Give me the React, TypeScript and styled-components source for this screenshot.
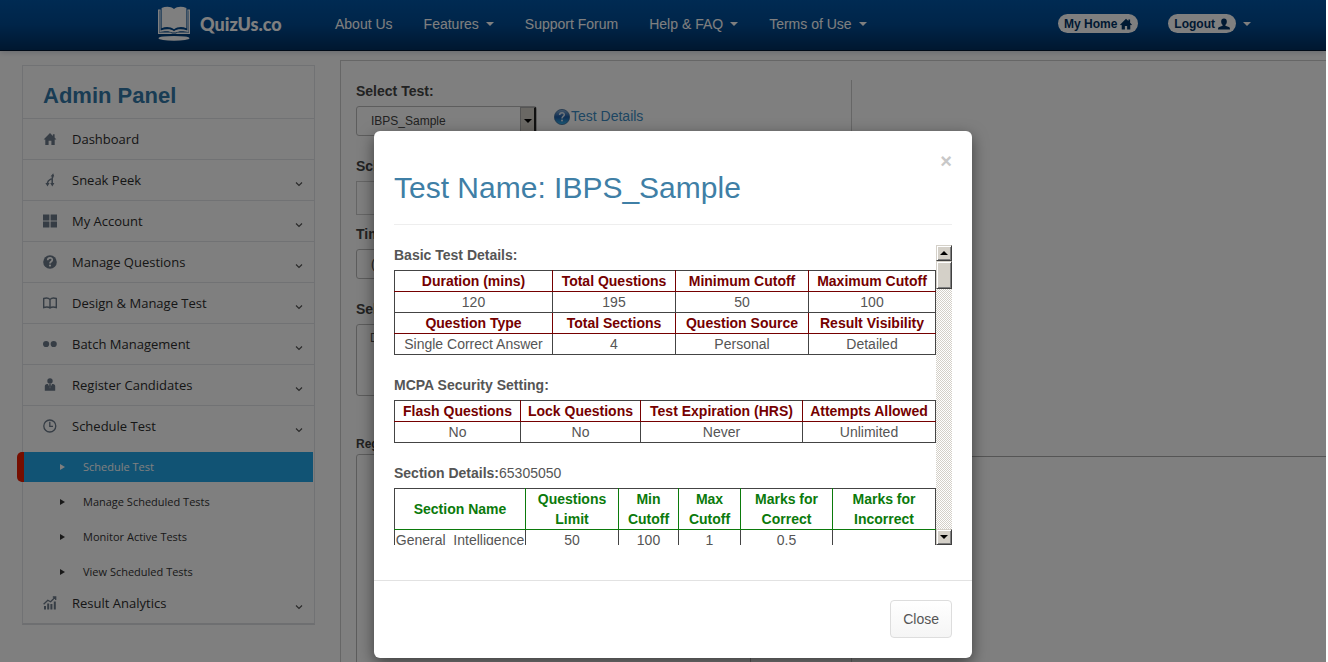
import React from 'react';
import styled, { createGlobalStyle, css } from 'styled-components';

const sans = '"Liberation Sans", Arial, sans-serif';
const humanist = '"Open Sans", "Noto Sans", sans-serif';

const GlobalStyle = createGlobalStyle`
  *, *::before, *::after { box-sizing: border-box; }
  body {
    margin: 0;
    background: #fff;
    color: #555;
    font-family: ${sans};
    font-size: 14px;
    line-height: 20px;
    overflow: hidden;
  }
  button, select, input, textarea { font-family: inherit; }
`;

const Shell = styled.div`
  position: relative;
  height: 100vh;
  margin-right: 2px;
  overflow: hidden;
`;

/* ---------- top navigation ---------- */

const NavBar = styled.header`
  display: flex;
  align-items: center;
  height: 51px;
  padding: 0 75px 3px 158px;
  background: linear-gradient(#0056a6, #004a92 50%, #002f60);
  border-bottom: 1px solid #00152e;
  box-shadow: 0 1px 6px rgba(0, 20, 60, 0.2);
  color: #fff;
`;

const Brand = styled.a`
  display: flex;
  align-items: center;
  gap: 10px;
  width: 177px;
  color: #fff;
  font-family: Lato, sans-serif;
  font-size: 18px;
  font-weight: 900;
  text-decoration: none;
`;

const NavLinks = styled.nav`
  display: flex;
  gap: 31px;
`;

const NavLink = styled.a`
  display: flex;
  align-items: center;
  gap: 7px;
  color: #fff;
  text-decoration: none;
  white-space: nowrap;
`;

const Caret = styled.span`
  border: 4px solid transparent;
  border-top-color: currentColor;
  border-bottom: 0;
`;

const UserLinks = styled.div`
  display: flex;
  gap: 30px;
  margin-left: auto;
`;

const Pill = styled.span`
  display: flex;
  align-items: center;
  gap: 3px;
  height: 19px;
  padding: 0 6px;
  border-radius: 10px;
  background: #fff;
  color: #003366;
  font-size: 12px;
  font-weight: bold;
`;

/* ---------- sidebar ---------- */

const Body = styled.div`
  display: flex;
  align-items: flex-start;
  gap: 25px;
  padding-left: 22px;
`;

const Sidebar = styled.aside`
  flex: 0 0 293px;
  margin-top: 14px;
  padding-bottom: 4px;
  border: 1px solid #e2e4e8;
  border-bottom: 2px solid #dcdee2;
  font-family: ${humanist};
`;

const PanelTitle = styled.h2`
  margin: 0;
  padding: 15px 20px 7px;
  color: #3279a8;
  font: bold 22px/30px ${sans};
`;

const MenuItem = styled.a<{ $compact?: boolean }>`
  display: flex;
  align-items: center;
  gap: 15px;
  height: ${(p) => (p.$compact ? '32px' : '41px')};
  padding: 0 11px 0 20px;
  border-top: ${(p) => (p.$compact ? '0' : '1px solid #e2e4e8')};
  color: #2c2c2c;
  font-size: 13px;
  text-decoration: none;
`;

const MenuIcon = styled.svg`
  width: 14px;
  height: 14px;
  color: #6c7a8a;
`;

const Chevron = styled.svg`
  width: 8px;
  height: 6px;
  margin: 8px 0 0 auto;
  color: #555;
`;

const SubMenu = styled.ul`
  display: flex;
  flex-direction: column;
  gap: 5px;
  margin: 0 1px 0 -6px;
  padding: 6px 0 0;
  list-style: none;
`;

const SubLink = styled.a<{ $active?: boolean }>`
  display: flex;
  align-items: center;
  gap: 18px;
  height: 30px;
  padding-left: 36px;
  border-left: 7px solid transparent;
  color: #333;
  font-size: 11px;
  text-decoration: none;
  ${(p) =>
    p.$active &&
    css`
      border-left-color: #ec1c00;
      border-radius: 5px 0 0 5px;
      background: #22a6e8;
      color: #fff;
    `}

  &::before {
    content: '';
    border: 3px solid transparent;
    border-left: 5px solid currentColor;
    border-right: 0;
  }
`;

/* ---------- form behind the dialog ---------- */

const Main = styled.main`
  display: flex;
  flex: 1;
  min-width: 0;
  height: calc(100vh - 60px);
  margin: 9px 0 0;
  padding: 19px 0 0 15px;
  border: 1px solid #ccc;
  border-width: 1px 0 0 1px;
`;

const FormColumn = styled.form`
  flex: 0 0 496px;
  padding-top: 1px;
  border-right: 1px solid #ccc;
`;

const SideColumn = styled.div`
  flex: 1;
  height: 377px;
  border-bottom: 1px solid #aaa;
`;

const Field = styled.div<{ $gap: number }>`
  margin-bottom: ${(p) => p.$gap}px;
`;

const Label = styled.label<{ $small?: boolean }>`
  display: block;
  padding-bottom: ${(p) => (p.$small ? 0 : 5)}px;
  color: #444;
  font-size: ${(p) => (p.$small ? 12 : 14)}px;
  font-weight: bold;
`;

const FieldRow = styled.div`
  display: flex;
  gap: 17px;
`;

const SelectFrame = styled.span`
  display: flex;
  width: 181px;
  height: 30px;
  border: 1px solid #bbb;
  border-radius: 3px;
`;

const Select = styled.select`
  flex: 1;
  min-width: 0;
  padding: 0 0 0 14px;
  border: 0;
  appearance: none;
  background: transparent;
  color: #444;
  font-size: 12px;
`;

const SelectArrow = styled.span`
  display: flex;
  align-items: center;
  justify-content: center;
  width: 16px;
  border: 1px solid #aaa;
  border-right: 2px solid #222;
  background: #d4d0c8;
  color: #000;
`;

const TextInput = styled.input`
  display: block;
  width: 220px;
  height: 34px;
  border: 1px solid #ccc;
  background: transparent;
`;

const TextArea = styled.textarea<{ $tall?: boolean }>`
  display: block;
  width: ${(p) => (p.$tall ? 395 : 220)}px;
  height: ${(p) => (p.$tall ? 230 : 72)}px;
  padding: 3px 13px;
  border: 1px solid #bbb;
  border-radius: 3px;
  background: transparent;
  color: #555;
  font-size: 12px;
  line-height: 20px;
  resize: none;
`;

const HelpLink = styled.a`
  display: flex;
  align-items: center;
  gap: 1px;
  height: 20px;
  color: #3c8dc5;
  text-decoration: none;
`;

/* ---------- dialog ---------- */

const Backdrop = styled.div`
  position: absolute;
  inset: 0;
  display: flex;
  align-items: flex-start;
  justify-content: center;
  padding: 131px 0 0 20px;
  background: rgba(0, 0, 0, 0.5);
`;

const Dialog = styled.section`
  width: 598px;
  border-radius: 6px;
  background: #fff;
  box-shadow: 0 5px 15px rgba(0, 0, 0, 0.5);
`;

const DialogHead = styled.div`
  display: flex;
  flex-direction: column;
  margin: 0 20px 20px;
  padding: 20px 0;
  border-bottom: 1px solid #eee;
`;

const Dismiss = styled.button`
  align-self: flex-end;
  height: 20px;
  padding: 0;
  border: 0;
  background: none;
  color: #c8c8c8;
  font-size: 20px;
  font-weight: bold;
  line-height: 20px;
`;

const DialogTitle = styled.h1`
  margin: 0;
  color: #3f7fa6;
  font-size: 30px;
  font-weight: normal;
  line-height: 33px;
`;

const ScrollRow = styled.div`
  display: flex;
  height: 300px;
  margin: 0 20px 35px;
`;

const ScrollArea = styled.div`
  flex: 1;
  min-width: 0;
  overflow: hidden;
`;

const SectionLabel = styled.p`
  margin: 0 0 5px;
`;

const DataTable = styled.table<{ $head: string }>`
  width: 100%;
  margin-bottom: 20px;
  border: 1px solid #444;
  border-collapse: collapse;
  table-layout: fixed;
  text-align: center;

  th, td { padding: 0; }
  th { color: ${(p) => p.$head}; border-bottom: 1px solid ${(p) => p.$head}; }
  th + th { border-left: 1px solid ${(p) => p.$head}; }
  td { border: 1px solid #444; height: 20px; }
`;

const ScrollBar = styled.div`
  display: flex;
  flex-direction: column;
  width: 16px;
  background: repeating-conic-gradient(#d4d0c8 0 25%, #fff 0 50%) 0 0 / 2px 2px;
`;

const Bevel = css`
  border: 1px solid;
  border-color: #d4d0c8 #404040 #404040 #d4d0c8;
  background: #d4d0c8;
  box-shadow: inset 1px 1px #fff, inset -1px -1px #808080;
`;

const ScrollButton = styled.button`
  ${Bevel}
  display: flex;
  align-items: center;
  justify-content: center;
  height: 16px;
  padding: 0;
  color: #000;
`;

const ScrollThumb = styled.div`
  ${Bevel}
  height: 28px;
  margin-bottom: auto;
`;

const ArrowUp = styled(Caret)`
  transform: rotate(180deg);
`;

const DialogFoot = styled.div`
  display: flex;
  justify-content: flex-end;
  padding: 19px 20px 20px;
  border-top: 1px solid #e2e2e2;
`;

const CloseButton = styled.button`
  height: 38px;
  padding: 0 12px;
  border: 1px solid #ddd;
  border-radius: 4px;
  background: linear-gradient(#fff, #f5f5f5);
  color: #555;
  font-size: 14px;
`;

/* ---------- icons ---------- */

const icons: Record<string, React.ReactNode> = {
  home: <path fill="currentColor" d="M7 1 .6 7.4H2.3V13H5.6V8.8H8.4V13H11.7V7.4H13.4L11.6 5.6V2.3H9.9V3.9Z" />,
  branch: (
    <g fill="none" stroke="currentColor" strokeWidth="1.5">
      <path d="M9.6 2V4.6C9.2 6 4.6 6.6 4.6 9.4V11M9.2 4.6V11" />
      <path fill="currentColor" stroke="none" d="M7.6 3.4 10.2.3 11.2 3.4ZM2.4 10H6.6L4.5 13.6ZM7.2 10H11.4L9.3 13.6Z" />
    </g>
  ),
  grid: <path fill="currentColor" d="M0 .5H6.4V6.4H0ZM7.6.5H14V6.4H7.6ZM0 7.6H6.4V13.5H0ZM7.6 7.6H14V13.5H7.6Z" />,
  help: (
    <g>
      <circle cx="7" cy="7" r="6.8" fill="currentColor" />
      <path fill="none" stroke="#fff" strokeWidth="1.7" d="M4.7 5.2C4.8 2.1 9.4 2.2 9.3 4.9 9.2 6.6 7 6.5 7 8.6" />
      <circle cx="7" cy="10.6" r="1.1" fill="#fff" />
    </g>
  ),
  book: (
    <path fill="none" stroke="currentColor" strokeWidth="1.4" d="M7 3.4C5.6 2 2.8 1.8.7 2.5V11.5C2.8 10.8 5.6 10.8 7 12.1 8.4 10.8 11.2 10.8 13.3 11.5V2.5C11.2 1.8 8.4 2 7 3.4ZM7 3.4V12" />
  ),
  dots: (
    <g fill="currentColor">
      <circle cx="3.1" cy="7" r="3.1" />
      <circle cx="10.7" cy="7" r="3.1" />
    </g>
  ),
  user: (
    <g fill="currentColor">
      <circle cx="7" cy="3" r="2.7" />
      <path d="M1.8 12.8V8C1.8 6.4 3.4 6 5 6L7 10.4 9 6C10.6 6 12.2 6.4 12.2 8V12.8ZM6.3 5.9H7.7L7.9 8.2 7 10 6.1 8.2Z" />
    </g>
  ),
  clock: (
    <g fill="none" stroke="currentColor" strokeWidth="1.3">
      <circle cx="6.8" cy="7" r="6" />
      <path d="M6.8 2.8V7.4H10" />
    </g>
  ),
  chart: (
    <g fill="none" stroke="currentColor">
      <path strokeWidth="1.3" d="M.6 8.2 4.8 4.2 7.6 5.7 12.4 1M9.8 1H12.7V4" />
      <path strokeWidth="2" d="M2 13.5V10M5.2 13.5V7.4M8.4 13.5V8M11.8 13.5V5.5" />
    </g>
  ),
};

const Glyph = ({ name }: { name: string }) => (
  <MenuIcon viewBox="0 0 14 14" aria-hidden="true">
    {icons[name]}
  </MenuIcon>
);

const BookLogo = () => (
  <svg width="32" height="36" viewBox="0 0 32 36" fill="#fff" aria-hidden="true">
    <path d="M3.6 2C8 .2 13 .4 16 3 19 .4 24 .2 28.4 2V22.2C24 20.4 19.5 20.8 16 23.2 12.5 20.8 8 20.4 3.6 22.2Z" />
    <path d="M0 3.5H2.6V24.4C8 22.6 13 22.8 16 25.2 19 22.8 24 22.6 29.4 24.4V3.5H32V28H0ZM1 4.5V26.6H12.6L14 27.4H18L19.4 26.6H31V4.5H30.6V26C24 24.6 20 25 18 26.6H14C12 25 8 24.6 1.4 26V4.5Z" fillRule="evenodd" />
    <ellipse cx="16" cy="32.3" rx="15.5" ry="2.4" />
  </svg>
);

const HouseIcon = () => (
  <svg width="12" height="12" viewBox="0 0 14 14" fill="currentColor" aria-hidden="true">
    <path d="M7 .8 0 7.8 1.2 8.6 2 8V13.5H5.7V9.2H8.3V13.5H12V8L12.8 8.6 14 7.8 11.8 5.5V1.8H9.8V3.5Z" />
  </svg>
);

const PersonIcon = () => (
  <svg width="12" height="12" viewBox="0 0 14 14" fill="currentColor" aria-hidden="true">
    <path d="M7 .5C9.2.5 10.3 2 10.3 4 10.3 6 9.4 7.3 8.6 8V9L12.6 10.6C13.6 11 14 11.8 14 13.5H0C0 11.8.4 11 1.4 10.6L5.4 9V8C4.6 7.3 3.7 6 3.7 4 3.7 2 4.8.5 7 .5Z" />
  </svg>
);

const HelpBall = () => (
  <svg width="16" height="18" viewBox="0 0 16 18" aria-hidden="true">
    <defs>
      <linearGradient id="ball" x1="0" y1="0" x2="0" y2="1">
        <stop offset="0" stopColor="#8fb4da" />
        <stop offset=".5" stopColor="#1f5ea8" />
        <stop offset="1" stopColor="#39b4ee" />
      </linearGradient>
    </defs>
    <circle cx="8" cy="10" r="7.6" fill="url(#ball)" stroke="#3e6b98" strokeWidth=".8" />
    <path fill="none" stroke="#dde8f4" strokeWidth="1.5" d="M5.6 8C5.7 5 10.4 5.1 10.3 7.8 10.2 9.5 8 9.4 8 11.4" />
    <circle cx="8" cy="13.6" r="1" fill="#dde8f4" />
  </svg>
);

/* ---------- data ---------- */

const navItems = [
  { label: 'About Us' },
  { label: 'Features', menu: true },
  { label: 'Support Forum' },
  { label: 'Help & FAQ', menu: true },
  { label: 'Terms of Use', menu: true },
];

const menuItems = [
  { icon: 'home', label: 'Dashboard', leaf: true },
  { icon: 'branch', label: 'Sneak Peek' },
  { icon: 'grid', label: 'My Account' },
  { icon: 'help', label: 'Manage Questions' },
  { icon: 'book', label: 'Design & Manage Test' },
  { icon: 'dots', label: 'Batch Management' },
  { icon: 'user', label: 'Register Candidates' },
  { icon: 'clock', label: 'Schedule Test' },
];

const subItems = ['Schedule Test', 'Manage Scheduled Tests', 'Monitor Active Tests', 'View Scheduled Tests'];

type Row = { head?: boolean; cells: string[] };

const basicRows: Row[] = [
  { head: true, cells: ['Duration (mins)', 'Total Questions', 'Minimum Cutoff', 'Maximum Cutoff'] },
  { cells: ['120', '195', '50', '100'] },
  { head: true, cells: ['Question Type', 'Total Sections', 'Question Source', 'Result Visibility'] },
  { cells: ['Single Correct Answer', '4', 'Personal', 'Detailed'] },
];

const securityRows: Row[] = [
  { head: true, cells: ['Flash Questions', 'Lock Questions', 'Test Expiration (HRS)', 'Attempts Allowed'] },
  { cells: ['No', 'No', 'Never', 'Unlimited'] },
];

const sectionRows: Row[] = [
  {
    head: true,
    cells: ['Section Name', 'Questions Limit', 'Min Cutoff', 'Max Cutoff', 'Marks for Correct', 'Marks for Incorrect'],
  },
  { cells: ['General_Intelligence', '50', '100', '1', '0.5', ''] },
];

const Column = styled.col<{ $width: number }>`
  width: ${(p) => p.$width}px;
`;

const Grid = ({ rows, widths, color }: { rows: Row[]; widths: number[]; color: string }) => (
  <DataTable $head={color}>
    <colgroup>
      {widths.map((w, i) => (
        <Column key={i} $width={w} />
      ))}
      <col />
    </colgroup>
    <tbody>
      {rows.map((row, r) => (
        <tr key={r}>
          {row.cells.map((cell, c) => (row.head ? <th key={c}>{cell}</th> : <td key={c}>{cell}</td>))}
        </tr>
      ))}
    </tbody>
  </DataTable>
);

const Expand = () => (
  <Chevron viewBox="0 0 8 6" aria-hidden="true">
    <path fill="none" stroke="currentColor" strokeWidth="1.2" d="M1 1.5 4 4.4 7 1.5" />
  </Chevron>
);

export default function App() {
  return (
    <Shell>
      <GlobalStyle />
      <NavBar>
        <Brand href="#">
          <BookLogo />
          QuizUs.co
        </Brand>
        <NavLinks>
          {navItems.map((item) => (
            <NavLink href="#" key={item.label}>
              {item.label}
              {item.menu && <Caret />}
            </NavLink>
          ))}
        </NavLinks>
        <UserLinks>
          <NavLink href="#">
            <Pill>
              My Home <HouseIcon />
            </Pill>
          </NavLink>
          <NavLink href="#">
            <Pill>
              Logout <PersonIcon />
            </Pill>
            <Caret />
          </NavLink>
        </UserLinks>
      </NavBar>

      <Body>
        <Sidebar>
          <PanelTitle>Admin Panel</PanelTitle>
          {menuItems.map((item) => (
            <MenuItem href="#" key={item.label}>
              <Glyph name={item.icon} />
              {item.label}
              {!item.leaf && <Expand />}
            </MenuItem>
          ))}
          <SubMenu>
            {subItems.map((label, i) => (
              <li key={label}>
                <SubLink href="#" $active={i === 0}>
                  {label}
                </SubLink>
              </li>
            ))}
          </SubMenu>
          <MenuItem href="#" $compact>
            <Glyph name="chart" />
            Result Analytics
            <Expand />
          </MenuItem>
        </Sidebar>

        <Main>
          <FormColumn>
            <Field $gap={20}>
              <Label htmlFor="test">Select Test:</Label>
              <FieldRow>
                <SelectFrame>
                  <Select id="test">
                    <option>IBPS_Sample</option>
                  </Select>
                  <SelectArrow>
                    <Caret />
                  </SelectArrow>
                </SelectFrame>
                <HelpLink href="#">
                  <HelpBall />
                  Test Details
                </HelpLink>
              </FieldRow>
            </Field>
            <Field $gap={9}>
              <Label htmlFor="schedule">Schedule:</Label>
              <TextInput id="schedule" />
            </Field>
            <Field $gap={20}>
              <Label htmlFor="zone">Time:</Label>
              <SelectFrame>
                <Select id="zone">
                  <option>(GMT)</option>
                </Select>
                <SelectArrow>
                  <Caret />
                </SelectArrow>
              </SelectFrame>
            </Field>
            <Field $gap={38}>
              <Label htmlFor="batch">Select:</Label>
              <TextArea id="batch" defaultValue="D" />
            </Field>
            <Field $gap={0}>
              <Label htmlFor="registered" $small>
                Registered
              </Label>
              <TextArea id="registered" $tall />
            </Field>
          </FormColumn>
          <SideColumn />
        </Main>
      </Body>

      <Backdrop>
        <Dialog role="dialog" aria-labelledby="dialog-title">
          <DialogHead>
            <Dismiss aria-label="Dismiss">×</Dismiss>
            <DialogTitle id="dialog-title">Test Name: IBPS_Sample</DialogTitle>
          </DialogHead>
          <ScrollRow>
            <ScrollArea>
              <SectionLabel>
                <b>Basic Test Details:</b>
              </SectionLabel>
              <Grid rows={basicRows} widths={[158, 123, 133]} color="#750000" />
              <SectionLabel>
                <b>MCPA Security Setting:</b>
              </SectionLabel>
              <Grid rows={securityRows} widths={[126, 120, 162]} color="#750000" />
              <SectionLabel>
                <b>Section Details:</b>65305050
              </SectionLabel>
              <Grid rows={sectionRows} widths={[131, 93, 60, 62, 92]} color="#0b7a0b" />
            </ScrollArea>
            <ScrollBar>
              <ScrollButton aria-label="Scroll up">
                <ArrowUp />
              </ScrollButton>
              <ScrollThumb />
              <ScrollButton aria-label="Scroll down">
                <Caret />
              </ScrollButton>
            </ScrollBar>
          </ScrollRow>
          <DialogFoot>
            <CloseButton>Close</CloseButton>
          </DialogFoot>
        </Dialog>
      </Backdrop>
    </Shell>
  );
}
